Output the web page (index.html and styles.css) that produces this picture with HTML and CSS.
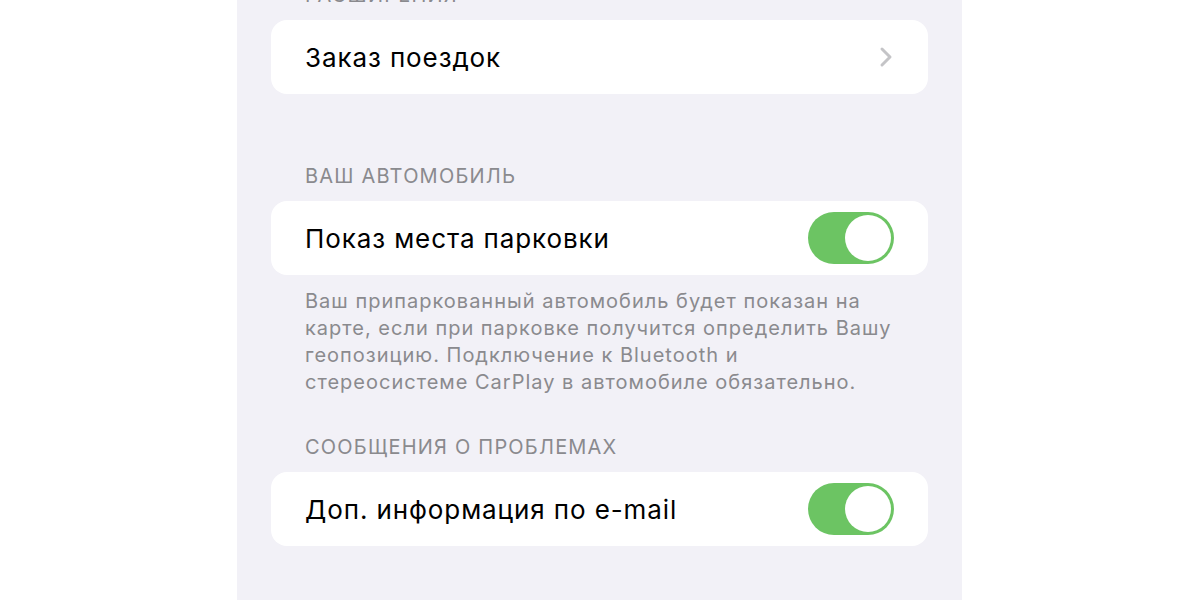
FILE: index.html
```html
<!DOCTYPE html>
<html>
<head>
    <title>Карты</title>
    <link rel="stylesheet" href="styles.css">
</head>
<body>
    <div class="panel">
        <div class="section first">
            <div class="section-header">Расширения</div>
            <div class="card">
                <div class="row">
                    <span class="row-label">Заказ поездок</span>
                    <svg class="chevron" width="14" height="22" viewBox="0 0 14 22">
                        <path d="M3 3 L11 11 L3 19" fill="none" stroke="#c4c4c7" stroke-width="3" stroke-linecap="round" stroke-linejoin="round"/>
                    </svg>
                </div>
            </div>
        </div>

        <div class="section">
            <div class="section-header">Ваш автомобиль</div>
            <div class="card">
                <div class="row">
                    <span class="row-label">Показ места парковки</span>
                    <span class="toggle on"><span class="knob"></span></span>
                </div>
            </div>
            <div class="section-footer">
                Ваш припаркованный автомобиль будет показан на<br>
                карте, если при парковке получится определить Вашу<br>
                геопозицию. Подключение к Bluetooth и<br>
                стереосистеме CarPlay в автомобиле обязательно.
            </div>
        </div>

        <div class="section">
            <div class="section-header">Сообщения о проблемах</div>
            <div class="card">
                <div class="row">
                    <span class="row-label">Доп. информация по e-mail</span>
                    <span class="toggle on"><span class="knob"></span></span>
                </div>
            </div>
        </div>
    </div>
</body>
</html>
```

FILE: styles.css
```css
html, body {
    margin: 0;
    height: 100%;
}

body {
    background: #fff;
    font-family: Inter, "Noto Sans", sans-serif;
    overflow: hidden;
}

.panel {
    display: flow-root;
    width: 725px;
    height: 100%;
    margin-left: calc(50% - 363px);
    padding: 0 34px;
    box-sizing: border-box;
    background: #f2f1f7;
}

.section.first {
    margin-top: -17px;
}

.section:nth-child(2) {
    margin-top: 70px;
}

.section:nth-child(3) {
    margin-top: 39px;
}

.section-header {
    padding: 0 34px 13px;
    font-size: 20px;
    line-height: 24px;
    letter-spacing: 1.2px;
    color: #8a8a8e;
    text-transform: uppercase;
}

.card {
    background: #fff;
    border-radius: 16px;
}

.row {
    display: flex;
    align-items: center;
    justify-content: space-between;
    height: 74px;
    padding: 0 34px;
}

.row-label {
    font-size: 26px;
    letter-spacing: 0.9px;
    color: #000;
}

.chevron {
    display: block;
    margin-right: 1px;
}

.toggle {
    display: flex;
    align-items: center;
    width: 86px;
    height: 52px;
    padding: 3px;
    box-sizing: border-box;
    border-radius: 26px;
    background: #e9e9eb;
}

.toggle.on {
    background: #6cc463;
    justify-content: flex-end;
}

.knob {
    width: 46px;
    height: 46px;
    border-radius: 50%;
    background: #fff;
}

.section-footer {
    padding: 13px 34px 0;
    font-size: 20px;
    line-height: 27px;
    letter-spacing: 1px;
    color: #8a8a8e;
}
```
